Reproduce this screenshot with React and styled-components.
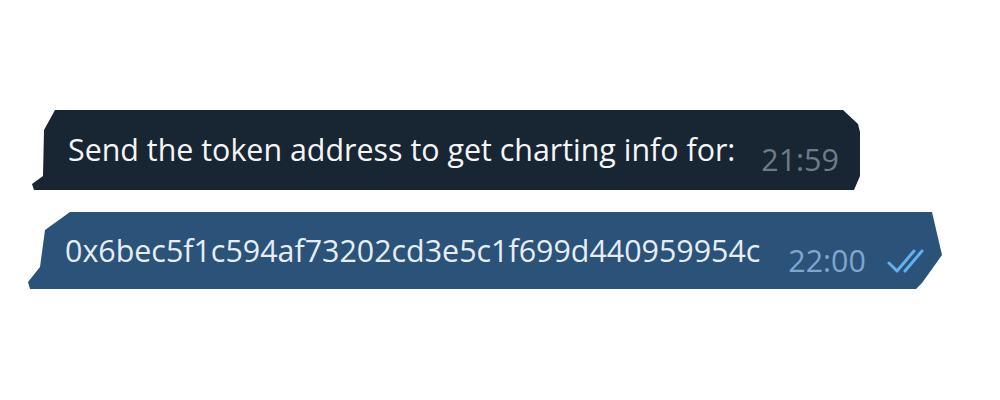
import styled, { createGlobalStyle } from "styled-components";

const GlobalStyle = createGlobalStyle`
  html, body {
    margin: 0;
    padding: 0;
    background: #ffffff;
  }
`;

const Page = styled.div`
  width: 1000px;
  height: 400px;
  display: flex;
  flex-direction: column;
  padding-top: 110px;
  gap: 22px;
  box-sizing: border-box;
  font-family: "Open Sans", "Noto Sans", sans-serif;
`;

const Bubble = styled.div`
  box-sizing: border-box;
  width: ${(p) => p.$w}px;
  height: ${(p) => p.$h}px;
  margin-left: ${(p) => p.$left}px;
  padding-left: ${(p) => p.$pad}px;
  background: ${(p) => (p.$out ? "#2b5278" : "#182533")};
  clip-path: ${(p) => p.$clip};
  display: flex;
  align-items: center;
`;

const Text = styled.span`
  font-size: 30.4px;
  line-height: 40px;
  color: ${(p) => (p.$out ? "#e6edf4" : "#f4f6f8")};
  white-space: nowrap;
`;

const Time = styled.span`
  margin-left: ${(p) => p.$gap}px;
  margin-top: 20px;
  font-size: 30.4px;
  line-height: 40px;
  color: ${(p) => (p.$out ? "#7ea7cf" : "#6d7b89")};
`;

const Ticks = styled.svg`
  margin-left: 20px;
  margin-top: 20px;
`;

const Checks = () => (
  <Ticks width="46" height="28" viewBox="0 0 46 28">
    <path
      d="M3 16 L11 24 L28 4 M19 24 L36 4"
      fill="none"
      stroke="#62b1ee"
      strokeWidth="3"
      strokeLinecap="round"
      strokeLinejoin="round"
    />
  </Ticks>
);

const inClip =
  "polygon(23px 0, 811px 0, 826px 14px, 828px 22px, 828px 66px, 822px 80px, 2px 80px, 0 74px, 11px 66px, 12px 20px)";
const outClip =
  "polygon(42px 0, 904px 0, 914px 43px, 894px 71px, 888px 77px, 2px 77px, 0 70px, 12px 55px, 17px 18px)";

export default function App() {
  return (
    <>
      <GlobalStyle />
      <Page>
        <Bubble $w={828} $h={80} $left={32} $pad={36} $clip={inClip}>
          <Text>Send the token address to get charting info for:</Text>
          <Time $gap={26}>21:59</Time>
        </Bubble>
        <Bubble $out $w={915} $h={77} $left={28} $pad={37} $clip={outClip}>
          <Text $out>0x6bec5f1c594af73202cd3e5c1f699d440959954c</Text>
          <Time $out $gap={28}>22:00</Time>
          <Checks />
        </Bubble>
      </Page>
    </>
  );
}
